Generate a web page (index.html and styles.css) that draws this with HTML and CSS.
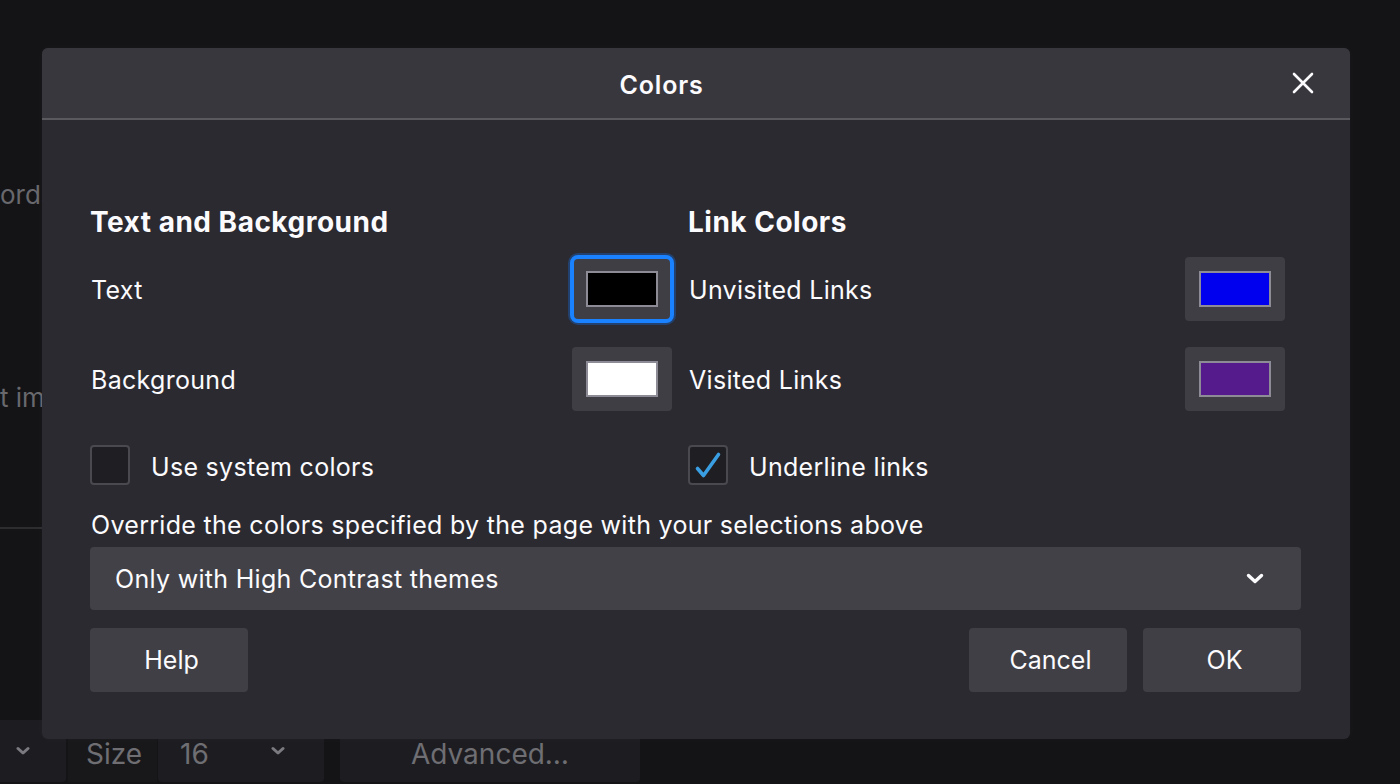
FILE: index.html
```html
<!DOCTYPE html>
<html lang="en">
<head>
<meta charset="utf-8">
<title>Colors</title>
<link rel="stylesheet" href="styles.css">
</head>
<body>
<div class="page">
  <div class="page-side">
    <p class="ghost ghost-1">ords</p>
    <p class="ghost ghost-2">t im</p>
    <div class="ghost-rule"></div>
  </div>
  <div class="page-bottom">
    <div class="pg-select pg-first">
      <svg class="pg-chev" width="14" height="10" viewBox="0 0 14 10"><path d="M2 2.5 L7 7 L12 2.5" fill="none" stroke="#7a7a80" stroke-width="3" stroke-linecap="round" stroke-linejoin="round"/></svg>
    </div>
    <span class="pg-label">Size</span>
    <div class="pg-select pg-size">
      <span>16</span>
      <svg class="pg-chev" width="14" height="10" viewBox="0 0 14 10"><path d="M2 2.5 L7 7 L12 2.5" fill="none" stroke="#7a7a80" stroke-width="3" stroke-linecap="round" stroke-linejoin="round"/></svg>
    </div>
    <div class="pg-button">Advanced…</div>
  </div>
</div>

<div class="dialog">
  <div class="dlg-header">
    <div class="dlg-title">Colors</div>
    <div class="dlg-close">
      <svg width="22" height="22" viewBox="0 0 22 22"><path d="M2 2 L20 20 M20 2 L2 20" stroke="#fbfbfe" stroke-width="2.6" stroke-linecap="round"/></svg>
    </div>
  </div>
  <div class="dlg-body">
    <div class="columns">
      <div class="col">
        <h2 class="col-title">Text and Background</h2>
        <div class="row">
          <span class="row-label">Text</span>
          <div class="swatch swatch-focus"><div class="chip" style="background:#000000"></div></div>
        </div>
        <div class="row">
          <span class="row-label">Background</span>
          <div class="swatch"><div class="chip" style="background:#ffffff"></div></div>
        </div>
        <div class="check-row">
          <div class="checkbox"></div>
          <span class="check-label">Use system colors</span>
        </div>
      </div>
      <div class="col">
        <h2 class="col-title">Link Colors</h2>
        <div class="row">
          <span class="row-label">Unvisited Links</span>
          <div class="swatch"><div class="chip" style="background:#0000ee"></div></div>
        </div>
        <div class="row">
          <span class="row-label">Visited Links</span>
          <div class="swatch"><div class="chip" style="background:#551a8b"></div></div>
        </div>
        <div class="check-row">
          <div class="checkbox">
            <svg width="36" height="36" viewBox="0 0 36 36"><path d="M7.5 21.5 L13.5 28.5 L28.5 7.5" fill="none" stroke="#3a9fe2" stroke-width="3.6" stroke-linecap="round" stroke-linejoin="round"/></svg>
          </div>
          <span class="check-label">Underline links</span>
        </div>
      </div>
    </div>
    <p class="override">Override the colors specified by the page with your selections above</p>
    <div class="select">
      <span>Only with High Contrast themes</span>
      <svg width="18" height="12" viewBox="0 0 18 12"><path d="M2.5 2.5 L9 8.5 L15.5 2.5" fill="none" stroke="#fbfbfe" stroke-width="3.4" stroke-linecap="round" stroke-linejoin="round"/></svg>
    </div>
    <div class="actions">
      <button class="btn">Help</button>
      <div class="actions-right">
        <button class="btn">Cancel</button>
        <button class="btn">OK</button>
      </div>
    </div>
  </div>
</div>
</body>
</html>
```

FILE: styles.css
```css
html, body {
  margin: 0;
  padding: 0;
}
body {
  width: 1400px;
  height: 784px;
  overflow: hidden;
  position: relative;
  background: #141417;
  font-family: "Inter", "Noto Sans", sans-serif;
  color: #fbfbfe;
}

/* background page */
.page {
  height: 784px;
  display: flex;
  flex-direction: column;
}
.page-side {
  flex: 1;
  display: flex;
  flex-direction: column;
}
.ghost {
  margin: 0;
  font-size: 26px;
  line-height: 32px;
  color: #68686d;
  white-space: nowrap;
}
.ghost-1 {
  margin-top: 179px;
}
.ghost-2 {
  margin-top: 171px;
}
.ghost-rule {
  margin-top: 113px;
  height: 2px;
  width: 60px;
  background: #2c2c31;
}
.page-bottom {
  height: 62px;
  margin-bottom: 2px;
  display: flex;
  align-items: stretch;
  font-size: 28px;
  color: #6e6e73;
}
.pg-select {
  background: #1d1d21;
  border-radius: 4px;
  display: flex;
  align-items: center;
}
.pg-first {
  width: 86px;
  margin-left: -20px;
  justify-content: flex-end;
  padding-right: 36px;
  box-sizing: border-box;
}
.pg-label {
  display: flex;
  align-items: center;
  padding: 6px 0 0 18px;
  width: 89px;
  box-sizing: border-box;
  margin-left: 2px;
  background: #18181b;
}
.pg-size {
  width: 166px;
  margin-left: 1px;
  padding: 6px 0 0 22px;
  box-sizing: border-box;
}
.pg-size span {
  flex: 1;
}
.pg-size .pg-chev {
  margin-right: 39px;
  margin-top: -6px;
}
.pg-button {
  width: 300px;
  margin-left: 16px;
  background: #1d1d21;
  border-radius: 4px;
  display: flex;
  align-items: center;
  justify-content: center;
  padding-top: 6px;
  box-sizing: border-box;
}

/* dialog */
.dialog {
  position: absolute;
  left: 42px;
  top: 48px;
  width: 1308px;
  height: 691px;
  background: #2b2a30;
  border-radius: 6px;
  display: flex;
  flex-direction: column;
  box-shadow: 0 0 8px rgba(255, 255, 255, 0.03);
}
.dlg-header {
  height: 70px;
  flex: none;
  display: flex;
  align-items: center;
  background: #38373d;
  border-bottom: 2px solid #59595e;
  border-radius: 6px 6px 0 0;
}
.dlg-title {
  flex: 1;
  text-align: center;
  font-size: 25px;
  font-weight: 600;
  letter-spacing: 0.8px;
  padding-top: 4px;
}
.dlg-close {
  width: 44px;
  height: 44px;
  margin-right: 25px;
  display: flex;
  align-items: center;
  justify-content: center;
}
.dlg-body {
  padding: 0 49px 0 48px;
  display: flex;
  flex-direction: column;
}
.columns {
  display: grid;
  grid-template-columns: 582px 597px;
  column-gap: 16px;
  margin-top: 85px;
}
.col {
  display: flex;
  flex-direction: column;
}
.col-title {
  margin: 0 0 18px 0;
  font-size: 28px;
  line-height: 34px;
  font-weight: 700;
  letter-spacing: 0.5px;
}
.row {
  height: 64px;
  display: flex;
  align-items: center;
  justify-content: space-between;
  margin-bottom: 26px;
}
.row-label,
.check-label,
.override,
.select {
  font-size: 25px;
  letter-spacing: 0.3px;
}
.row-label {
  margin-left: 1px;
  padding-top: 2px;
}
.swatch {
  width: 100px;
  height: 64px;
  background: #3f3e44;
  border-radius: 4px;
  display: flex;
  align-items: center;
  justify-content: center;
  box-sizing: border-box;
}
.swatch-focus {
  outline: 4px solid #1a82ff;
  outline-offset: -2px;
  border-radius: 6px;
  box-shadow: 0 0 0 4px rgba(20, 110, 230, 0.35);
}
.chip {
  width: 72px;
  height: 36px;
  box-sizing: border-box;
  border: 2px solid #8d8c96;
}
.check-row {
  margin-top: 8px;
  height: 40px;
  display: flex;
  align-items: center;
}
.checkbox {
  width: 40px;
  height: 40px;
  flex: none;
  box-sizing: border-box;
  border: 2px solid #4a494f;
  border-radius: 4px;
  background: #1f1e23;
  display: flex;
  align-items: center;
  justify-content: center;
}
.check-label {
  margin-left: 21px;
  padding-top: 3px;
}
.override {
  margin: 25px 0 0 1px;
  line-height: 30px;
}
.select {
  margin-top: 7px;
  height: 63px;
  background: #424147;
  border-radius: 4px;
  display: flex;
  align-items: center;
  justify-content: space-between;
  padding: 0 37px 0 25px;
}
.actions {
  margin-top: 18px;
  display: flex;
  justify-content: space-between;
}
.actions-right {
  display: flex;
  gap: 16px;
}
.btn {
  width: 158px;
  height: 64px;
  border: none;
  border-radius: 4px;
  background: #403f45;
  color: #fbfbfe;
  font-family: "Inter", "Noto Sans", sans-serif;
  font-size: 25px;
  padding: 0 0 0 5px;
}
```
